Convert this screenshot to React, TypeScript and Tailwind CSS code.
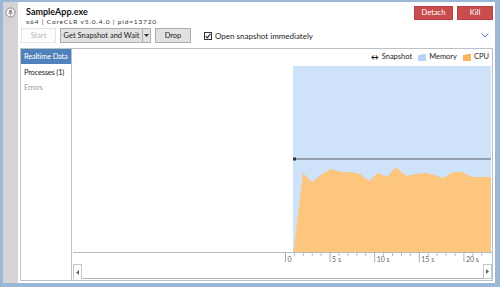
import React from 'react';

const FONT = { fontFamily: 'Lato, "Open Sans", sans-serif' };

const cpu: [number, number][] = [
  [231, 108], [240, 117], [250, 109], [259, 104], [269, 107], [279, 107], [288, 109],
  [297, 116], [306, 108], [315, 112], [324, 102], [334, 111], [344, 109], [354, 108],
  [362, 110], [371, 113], [381, 107], [390, 107], [400, 112], [419, 112],
];

function Chart() {
  const majors = [213, 257.6, 302.2, 346.8, 391.4];
  const labels = ['0', '5 s', '10 s', '15 s', '20 s'];
  const minors: number[] = [];
  for (let i = 0; i < 23; i++) {
    const x = 213 + i * 8.92;
    if (i % 5 !== 0 && x < 420) minors.push(x);
  }
  const cpuPts = ['221.5,187', ...cpu.map(([x, y]) => `${x},${y}`), '419,187'].join(' ');
  return (
    <svg width="420" height="199" className="block">
      <rect x="221" y="1" width="198" height="186" fill="#cee2fa" />
      <polygon points={cpuPts} fill="#fcc67f" />
      <line x1="222" y1="94" x2="419" y2="94" stroke="#7d8896" strokeWidth="1.5" />
      <rect x="221" y="92.5" width="3" height="3" fill="#333" />
      <line x1="1" y1="187.5" x2="420" y2="187.5" stroke="#b4bac2" strokeWidth="1" />
      {majors.map((x, i) => (
        <g key={i}>
          <line x1={x + 0.5} y1="187" x2={x + 0.5} y2="197" stroke="#a8aeb6" strokeWidth="1" />
          <text x={x + 2.5} y="197" fontSize="7" fill="#666" style={FONT}>{labels[i]}</text>
        </g>
      ))}
      {minors.map((x, i) => (
        <line key={i} x1={x + 0.5} y1="187" x2={x + 0.5} y2="191" stroke="#b4bac2" strokeWidth="1" />
      ))}
    </svg>
  );
}

function FolderIcon({ color }: { color: string }) {
  return (
    <svg width="8" height="7" viewBox="0 0 8 7" className="block">
      <path d="M0 1 L2.5 1 L3.5 0 L8 0 L8 7 L0 7 Z" fill={color} />
    </svg>
  );
}

export default function App() {
  return (
    <div className="w-[500px] h-[287px] bg-[#9bb7d7] pt-[2px] pl-[3px] pr-[5px] pb-[4px] flex text-[#1e1e1e]" style={FONT}>
      {/* side strip */}
      <div className="w-[16px] bg-[#d4d4d4] flex justify-center pt-[5px]">
        <svg width="11" height="11" viewBox="0 0 11 11" className="block">
          <circle cx="5.5" cy="5.5" r="4.6" fill="#f4f4f4" stroke="#8c8c8c" strokeWidth="1" />
          <rect x="4.3" y="2.8" width="2.4" height="3" fill="#888" />
          <rect x="3.4" y="5.6" width="4.2" height="1" fill="#888" />
          <rect x="5.1" y="6.6" width="0.8" height="1.8" fill="#888" />
        </svg>
      </div>

      <div className="flex-1 bg-white flex flex-col">
        {/* header */}
        <div className="h-[24px] flex pl-[8px] pr-[2px]">
          <div className="flex-1 pt-[4px]">
            <div className="text-[9px] leading-[12px] font-bold text-[#111] whitespace-nowrap">SampleApp.exe</div>
            <div className="text-[6.5px] leading-[7px] tracking-[0.85px] text-[#333] whitespace-nowrap">x64 | CoreCLR v5.0.4.0 | pid=13720</div>
          </div>
          <div className="flex gap-[4px] pt-[4px]">
            <div className="w-[39px] h-[14px] bg-[#c94c4e] border border-[#b84043] text-white text-[7.5px] flex items-center justify-center">Detach</div>
            <div className="w-[36px] h-[14px] bg-[#c94c4e] border border-[#b84043] text-white text-[7.5px] flex items-center justify-center">Kill</div>
          </div>
        </div>

        {/* toolbar */}
        <div className="mt-[2px] h-[15px] flex items-center pl-[3px] pr-[6px] text-[7.5px] whitespace-nowrap">
          <div className="w-[35px] h-[15px] border border-[#e3e3e3] bg-[#fdfdfd] text-[#b8b8b8] flex items-center justify-center">Start</div>
          <div className="ml-[4px] h-[15px] flex border border-[#adadad] bg-[#e1e1e1]">
            <div className="w-[81px] flex items-center justify-center">Get Snapshot and Wait</div>
            <div className="w-[8px] border-l border-[#adadad] flex items-center justify-center">
              <svg width="5" height="3" viewBox="0 0 5 3" className="block">
                <path d="M0 0 L5 0 L2.5 3 Z" fill="#333" />
              </svg>
            </div>
          </div>
          <div className="ml-[4px] w-[36px] h-[15px] border border-[#adadad] bg-[#e1e1e1] flex items-center justify-center">Drop</div>
          <div className="ml-[13px] w-[8px] h-[8px] border border-[#333] bg-white flex items-center justify-center">
            <svg width="6" height="6" viewBox="0 0 6 6" className="block">
              <path d="M0.6 3.2 L2.3 4.9 L5.4 0.8" fill="none" stroke="#222" strokeWidth="1.1" />
            </svg>
          </div>
          <div className="ml-[3px] text-[8px]">Open snapshot immediately</div>
          <div className="flex-1" />
          <svg width="8" height="5" viewBox="0 0 8 5" className="block">
            <path d="M0.5 0.5 L4 4 L7.5 0.5" fill="none" stroke="#4a7fc0" strokeWidth="1" />
          </svg>
        </div>

        {/* content */}
        <div className="mt-[5px] mx-[2px] mb-[2px] flex-1 border border-[#bac0c7] flex">
          <div className="w-[51px] border-r border-[#bac0c7] text-[7.5px] tracking-[-0.2px] flex flex-col whitespace-nowrap">
            <div className="h-[15px] bg-[#4f81bd] text-white flex items-center pl-[3px]">Realtime Data</div>
            <div className="h-[16px] flex items-center pl-[3px] pt-[1px]">Processes (1)</div>
            <div className="h-[16px] flex items-center pl-[3px] text-[#a0a0a0]">Errors</div>
          </div>
          <div className="flex-1 flex flex-col">
            <div className="h-[16px] flex items-center justify-end gap-[3px] pr-[3px] text-[7.5px] whitespace-nowrap">
              <span className="text-[8px] leading-none font-bold">↔</span>
              <span className="mr-[3px]">Snapshot</span>
              <FolderIcon color="#b5d3f5" />
              <span className="mr-[3px]">Memory</span>
              <FolderIcon color="#fbb560" />
              <span>CPU</span>
            </div>
            <Chart />
            <div className="h-[15px] flex ml-[1px]">
              <div className="w-[9px] border-l border-t border-r border-[#c4c8cd] flex items-center justify-center">
                <svg width="3" height="5" viewBox="0 0 3 5" className="block">
                  <path d="M3 0 L0 2.5 L3 5 Z" fill="#666" />
                </svg>
              </div>
              <div className="flex-1 border-b border-[#b0b5bb]" />
              <div className="w-[9px] border border-[#c4c8cd] flex items-center justify-center">
                <svg width="3" height="5" viewBox="0 0 3 5" className="block">
                  <path d="M0 0 L3 2.5 L0 5 Z" fill="#666" />
                </svg>
              </div>
            </div>
          </div>
        </div>
      </div>
    </div>
  );
}
